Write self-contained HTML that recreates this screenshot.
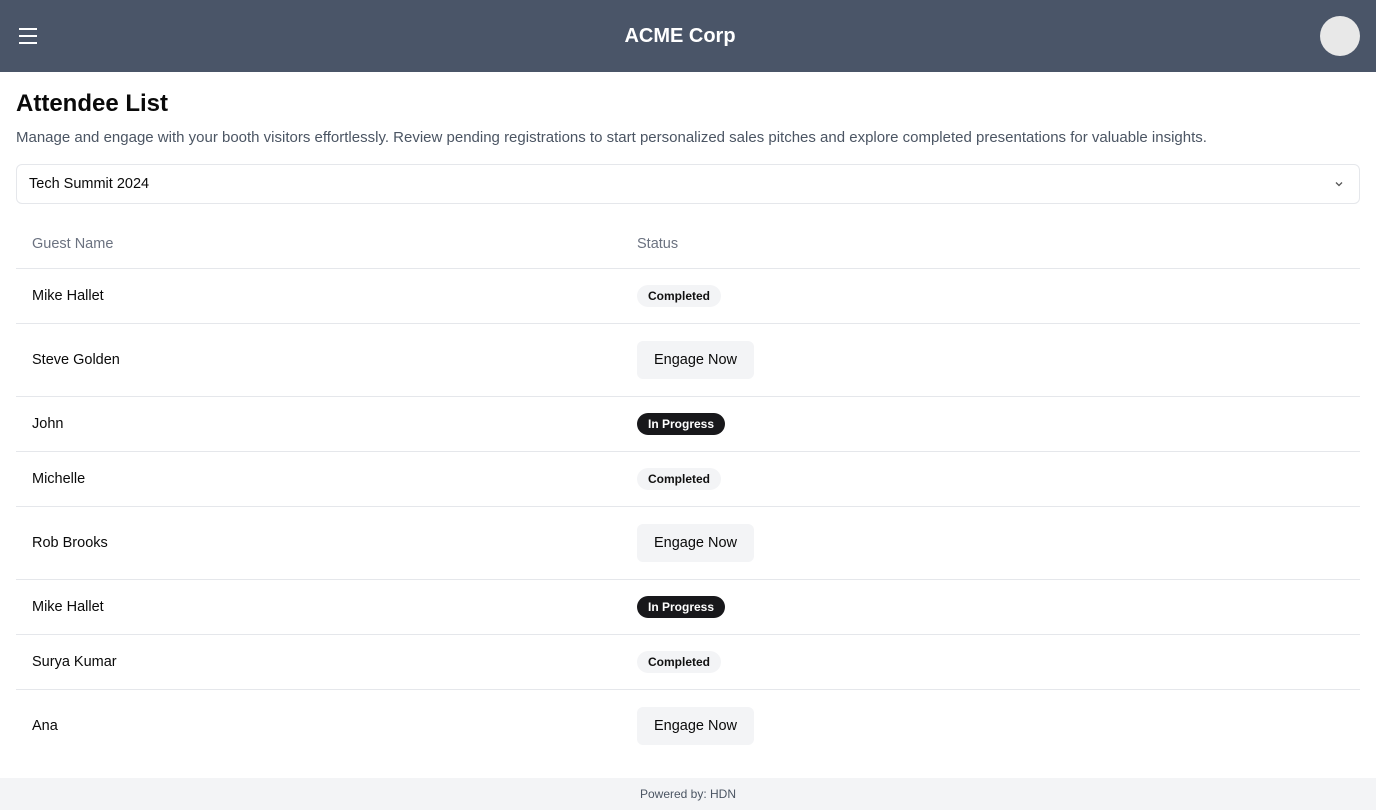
<!DOCTYPE html>
<html><head><style>
*{box-sizing:border-box;margin:0;padding:0}
body{width:1376px;height:810px;font-family:"Liberation Sans",sans-serif;background:#fff;position:relative;overflow:hidden;color:#0a0a0a}
.top{height:72px;background:#4a5568;position:relative}
.top h1{position:absolute;left:0;right:16px;top:25px;text-align:center;color:#fff;font-size:20px;font-weight:bold}
.ham{position:absolute;left:19px;top:28px;width:18px}
.ham i{display:block;height:2px;background:#fff;margin-bottom:5px}
.av{position:absolute;left:1320px;top:16px;width:40px;height:40px;border-radius:50%;background:#e8e8e8}
h2{position:absolute;left:16px;top:90px;font-size:24px;font-weight:bold}
p.d{position:absolute;left:16px;top:129px;font-size:15px;color:#4b5563}
.sel{position:absolute;left:16px;top:164px;width:1344px;height:40px;border:1px solid #e5e7eb;border-radius:6px;font-size:14.5px;padding:11px 12px}
.sel svg{position:absolute;right:14px;top:13px}
table{position:absolute;left:16px;top:221px;width:1344px;border-collapse:collapse;font-size:14.5px}
th{text-align:left;font-weight:normal;color:#6b7280;height:47px;padding-left:16px;border-bottom:1px solid #e5e7eb}
td{padding-left:16px;border-bottom:1px solid #e5e7eb;height:55px;padding-top:1px}
td:first-child{width:605px;font-weight:500}
tr.e td{height:73px}
tr:last-child td{border-bottom:none}
.b{display:inline-block;font-size:12px;font-weight:bold;padding:4px 11px;border-radius:11px;background:#f3f4f6;color:#111}
.b.k{background:#18181b;color:#fff}
.btn{display:inline-block;background:#f3f4f6;border-radius:6px;padding:11px 17px;font-size:14.5px}
.f{position:absolute;left:0;top:778px;width:1376px;height:32px;background:#f3f4f6;text-align:center;font-size:12px;color:#4b5563;padding-top:9px}
</style></head><body>
<div class="top"><div class="ham"><i></i><i></i><i></i></div><h1>ACME Corp</h1><div class="av"></div></div>
<h2>Attendee List</h2>
<p class="d">Manage and engage with your booth visitors effortlessly. Review pending registrations to start personalized sales pitches and explore completed presentations for valuable insights.</p>
<div class="sel">Tech Summit 2024<svg width="12" height="12" viewBox="0 0 12 12"><path d="M3 4.5l3 3 3-3" stroke="#555" stroke-width="1.3" fill="none"/></svg></div>
<table>
<tr><th>Guest Name</th><th>Status</th></tr>
<tr><td>Mike Hallet</td><td><span class="b">Completed</span></td></tr>
<tr class="e"><td>Steve Golden</td><td><span class="btn">Engage Now</span></td></tr>
<tr><td>John</td><td><span class="b k">In Progress</span></td></tr>
<tr><td>Michelle</td><td><span class="b">Completed</span></td></tr>
<tr class="e"><td>Rob Brooks</td><td><span class="btn">Engage Now</span></td></tr>
<tr><td>Mike Hallet</td><td><span class="b k">In Progress</span></td></tr>
<tr><td>Surya Kumar</td><td><span class="b">Completed</span></td></tr>
<tr class="e"><td>Ana</td><td><span class="btn">Engage Now</span></td></tr>
</table>
<div class="f">Powered by: HDN</div>
</body></html>
